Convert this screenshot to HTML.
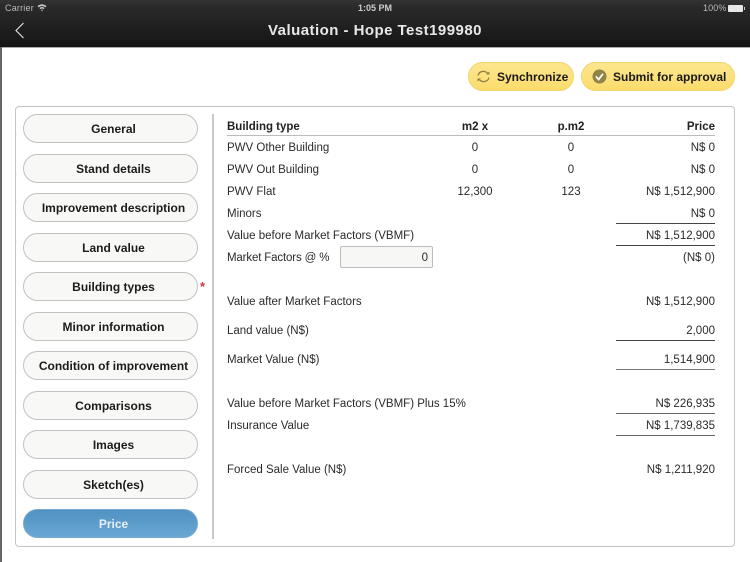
<!DOCTYPE html>
<html><head><meta charset="utf-8"><style>
html,body{margin:0;padding:0}
body{width:750px;height:562px;overflow:hidden;background:#fff;position:relative;font-family:"Liberation Sans",sans-serif;color:#222}
div,span{position:absolute;box-sizing:border-box}
.nav{left:23px;width:175px;height:29px;border:1px solid #c2c2c0;border-radius:15px;background:#f8f8f7;text-align:center;font-weight:bold;font-size:12px;line-height:29px;color:#1c1c1c;padding-left:6px}
.t{font-size:11.5px;line-height:14px;white-space:nowrap;color:#2a2a2a;margin-top:1px}
.r{text-align:right;right:35px}
.c1{left:435px;width:80px;text-align:center}
.c2{left:531px;width:80px;text-align:center}
.b{font-weight:bold;color:#222}
.ln{left:616px;width:99px;height:1px;background:#444}
.yb{top:62px;height:29px;border:1px solid #f0d66e;border-radius:15px;background:linear-gradient(#fde68f,#fbdc6c);font-weight:bold;font-size:12px;line-height:28px;color:#1a1a1a;white-space:nowrap}
</style></head><body>
<div style="left:0;top:0;width:750px;height:47px;background:linear-gradient(#333 0,#2a2a2a 15%,#151515 100%)"></div>
<div style="left:0;top:47px;width:750px;height:1px;background:#aaa"></div>
<div style="left:0;top:47px;width:1.5px;height:515px;background:#666"></div>
<span style="left:5px;top:2px;font-size:9px;line-height:12px;color:#bbb;letter-spacing:.2px">Carrier</span>
<svg style="position:absolute;left:37px;top:3px" width="10" height="9" viewBox="0 0 10 9"><path d="M0.5 3Q5-.5 9.500 3L8.500 4.200Q5 1.700 1.500 4.200ZM2.400 5Q5 3 7.600 5L6.600 6.100Q5 5 3.400 6.100ZM4 7Q5 6.300 6 7L5 8.200Z" fill="#ccc"/></svg>
<span style="left:0;width:750px;top:2px;text-align:center;font-size:9px;line-height:12px;font-weight:bold;color:#ccc">1:05 PM</span>
<span style="left:703px;top:2px;font-size:9px;line-height:12px;color:#bbb;letter-spacing:.1px">100%</span>
<div style="left:728px;top:5px;width:15px;height:7px;background:#e8e8e8;border-radius:1px"></div>
<div style="left:743.500px;top:7px;width:1px;height:3px;background:#ccc"></div>
<svg style="position:absolute;left:14px;top:21px" width="12" height="19" viewBox="0 0 12 19"><path d="M9.500 2L2 9.500L9.500 17" fill="none" stroke="#e6e6e6" stroke-width="1.100"/></svg>
<span style="left:0;width:750px;top:22px;text-align:center;font-size:15px;line-height:18px;font-weight:bold;color:#e8e8e8;letter-spacing:.46px">Valuation - Hope Test199980</span>

<div class="yb" style="left:468px;width:106px;padding-left:28px">Synchronize</div>
<svg style="position:absolute;left:476px;top:69px" width="15" height="15" viewBox="0 0 15 15"><path d="M2 6.500A5.500 5.500 0 0 1 12 5M13 8.500A5.500 5.500 0 0 1 3 10" fill="none" stroke="#8f8045" stroke-width="1.300"/><path d="M10 5.500H13.500V2.500ZM5 9.500H1.500V12.500Z" fill="#8f8045"/></svg>
<div class="yb" style="left:581px;width:154px;padding-left:31px">Submit for approval</div>
<svg style="position:absolute;left:592px;top:69px" width="15" height="15" viewBox="0 0 15 15"><circle cx="7.500" cy="7.500" r="7" fill="#8f8348"/><path d="M4 7.500L6.600 10.500L11 4.800" fill="none" stroke="#fff" stroke-width="1.800"/></svg>

<div style="left:15px;top:106px;width:720px;height:441px;border:1px solid #c4c4c4;border-radius:4px;background:#fff"></div>
<div style="left:212px;top:114px;width:1.500px;height:425px;background:#c8c8c8"></div>

<div class="nav" style="top:114px">General</div>
<div class="nav" style="top:154px">Stand details</div>
<div class="nav" style="top:193px">Improvement description</div>
<div class="nav" style="top:233px">Land value</div>
<div class="nav" style="top:272px">Building types</div>
<span style="left:200px;top:280px;font-size:13px;line-height:14px;font-weight:bold;color:#d8303c">*</span>
<div class="nav" style="top:312px">Minor information</div>
<div class="nav" style="top:351px">Condition of improvement</div>
<div class="nav" style="top:391px">Comparisons</div>
<div class="nav" style="top:430px">Images</div>
<div class="nav" style="top:470px">Sketch(es)</div>
<div class="nav" style="top:509px;border-color:#7aa8cd;background:linear-gradient(#4f92c3,#6aa7d4);color:#e8f0f6">Price</div>

<span class="t b" style="left:227px;top:119px">Building type</span>
<span class="t b c1" style="top:119px">m2 x</span>
<span class="t b c2" style="top:119px">p.m2</span>
<span class="t b r" style="top:119px">Price</span>
<div style="left:227px;top:135px;width:488px;height:1px;background:#bbb"></div>

<span class="t" style="left:227px;top:140px">PWV Other Building</span>
<span class="t c1" style="top:140px">0</span><span class="t c2" style="top:140px">0</span><span class="t r" style="top:140px">N$ 0</span>
<span class="t" style="left:227px;top:162px">PWV Out Building</span>
<span class="t c1" style="top:162px">0</span><span class="t c2" style="top:162px">0</span><span class="t r" style="top:162px">N$ 0</span>
<span class="t" style="left:227px;top:184px">PWV Flat</span>
<span class="t c1" style="top:184px">12,300</span><span class="t c2" style="top:184px">123</span><span class="t r" style="top:184px">N$ 1,512,900</span>
<span class="t" style="left:227px;top:206px">Minors</span>
<span class="t r" style="top:206px">N$ 0</span>
<div class="ln" style="top:223px"></div>
<span class="t" style="left:227px;top:228px">Value before Market Factors (VBMF)</span>
<span class="t r" style="top:228px">N$ 1,512,900</span>
<div class="ln" style="top:245px"></div>
<span class="t" style="left:227px;top:250px;letter-spacing:-.15px">Market Factors @ %</span>
<div style="left:340px;top:246px;width:93px;height:22px;border:1px solid #bbb;border-radius:2px;background:#f7f7f6;text-align:right;font-size:11.500px;line-height:22px;padding-right:4px;color:#2a2a2a">0</div>
<span class="t r" style="top:250px">(N$ 0)</span>
<span class="t" style="left:227px;top:294px">Value after Market Factors</span>
<span class="t r" style="top:294px">N$ 1,512,900</span>
<span class="t" style="left:227px;top:323px">Land value (N$)</span>
<span class="t r" style="top:323px">2,000</span>
<div class="ln" style="top:340px"></div>
<span class="t" style="left:227px;top:352px">Market Value (N$)</span>
<span class="t r" style="top:352px">1,514,900</span>
<div class="ln" style="top:369px;background:#777"></div>
<span class="t" style="left:227px;top:396px">Value before Market Factors (VBMF) Plus 15%</span>
<span class="t r" style="top:396px">N$ 226,935</span>
<div class="ln" style="top:413px;background:#666"></div>
<span class="t" style="left:227px;top:418px">Insurance Value</span>
<span class="t r" style="top:418px">N$ 1,739,835</span>
<div class="ln" style="top:435px;background:#666"></div>
<span class="t" style="left:227px;top:462px">Forced Sale Value (N$)</span>
<span class="t r" style="top:462px">N$ 1,211,920</span>
</body></html>
